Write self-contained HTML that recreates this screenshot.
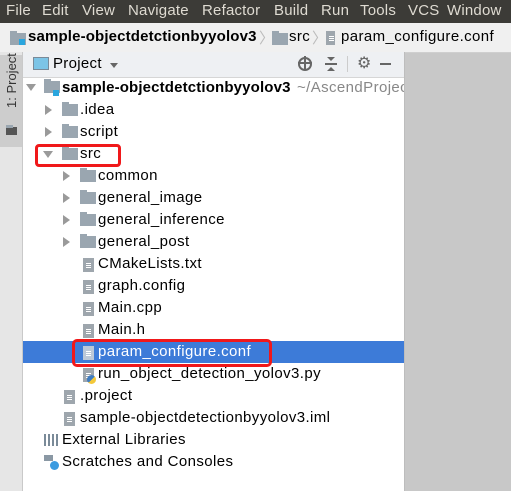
<!DOCTYPE html><html><head><style>
body{margin:0;width:511px;height:491px;overflow:hidden;background:#c8c8c8;font-family:"Liberation Sans","DejaVu Sans",sans-serif;font-size:15px;letter-spacing:.4px;color:#000;position:relative}
.a{position:absolute;white-space:nowrap}
.menu{left:0;top:0;width:511px;height:23px;background:#3c3b37;color:#dfdbd2;font-size:15px;letter-spacing:.2px}
.menu span{position:absolute;top:2px}
.bc{left:0;top:23px;width:511px;height:29px;background:#f0f0f0;border-bottom:1px solid #cfcfcf}
.strip{left:0;top:52px;width:22px;height:439px;background:#e6e6e6;border-right:1px solid #c9c9c9}
.panel{left:23px;top:52px;width:381px;height:439px;background:#fff;border-right:1px solid #bdbdbd;overflow:hidden}
.hdr{left:23px;top:52px;width:381px;height:25px;background:#eef0f3;border-bottom:1px solid #d6d6d6}
.fold{display:inline-block;width:16px;height:12px;background:#9aa6b0;position:absolute}
.fold:before{content:"";position:absolute;left:0;top:-2px;width:7px;height:3px;background:#9aa6b0}
.file{position:absolute;width:11px;height:14px;background:#9ea6ad}
.file:after{content:"";position:absolute;left:3px;top:5px;width:5px;height:1px;background:#fff;box-shadow:0 2px #fff,0 4px #fff}
.tri{position:absolute;width:0;height:0}
.tr{border-left:7px solid #9a9a9a;border-top:5px solid transparent;border-bottom:5px solid transparent}
.td{border-top:7px solid #9a9a9a;border-left:5px solid transparent;border-right:5px solid transparent}
.red{position:absolute;border:3px solid #f0181a;border-radius:4px}
</style></head><body>
<div class="a menu"><span style="left:6px">File</span><span style="left:42px">Edit</span><span style="left:82px">View</span><span style="left:128px">Navigate</span><span style="left:202px">Refactor</span><span style="left:274px">Build</span><span style="left:321px">Run</span><span style="left:360px">Tools</span><span style="left:408px">VCS</span><span style="left:447px">Window</span></div>
<div class="a bc">
<span class="fold" style="left:10px;top:10px"></span><span class="a" style="left:19px;top:16px;width:6px;height:6px;background:#2aa6de"></span>
<span class="a" style="left:28px;top:5px;font-weight:bold;letter-spacing:.15px">sample-objectdetctionbyyolov3</span>
<span class="a" style="left:259px;top:4px;color:#bbb">〉</span>
<span class="fold" style="left:272px;top:10px"></span>
<span class="a" style="left:289px;top:5px">src</span>
<span class="a" style="left:312px;top:4px;color:#bbb">〉</span>
<span class="file" style="left:326px;top:8px;width:9px"></span>
<span class="a" style="left:341px;top:5px">param_configure.conf</span>
</div>
<div class="a strip"><div class="a" style="left:0;top:3px;width:22px;height:92px;background:#cdcdcd"></div>
<div class="a" style="left:4px;top:56px;transform:rotate(-90deg);transform-origin:0 0;font-size:13px;letter-spacing:0;color:#333">1: Project</div>
<span class="fold" style="left:6px;top:75px;width:11px;height:8px;background:#555"></span></div>
<div class="a panel"><span class="a" style="left:274px;top:27px;color:#888">~/AscendProject</span></div>
<div class="a hdr">
<span class="a" style="left:10px;top:5px;width:16px;height:13px;background:#7cc4e6;border:1px solid #7a8a98;box-sizing:border-box"></span>
<span class="a" style="left:30px;top:3px;font-size:15px;letter-spacing:.3px">Project</span>
<span class="tri td" style="left:87px;top:11px;border-top-width:5px;border-top-color:#666;border-left-width:4px;border-right-width:4px"></span>
<span class="a" style="left:275px;top:5px;width:10px;height:10px;border:2px solid #666;border-radius:50%"></span>
<span class="a" style="left:281px;top:4px;width:2px;height:14px;background:#666"></span><span class="a" style="left:275px;top:10px;width:14px;height:2px;background:#666"></span>
<span class="a" style="left:302px;top:11px;width:12px;height:2px;background:#666"></span>
<span class="tri" style="left:304px;top:5px;border-top:4px solid #666;border-left:4px solid transparent;border-right:4px solid transparent"></span>
<span class="tri" style="left:304px;top:15px;border-bottom:4px solid #666;border-left:4px solid transparent;border-right:4px solid transparent"></span>
<span class="a" style="left:324px;top:4px;width:1px;height:16px;background:#ccc"></span>
<span class="a" style="left:334px;top:1px;color:#666;font-size:16px">⚙</span>
<span class="a" style="left:357px;top:11px;width:11px;height:2px;background:#666"></span>
</div>
<div class="a" style="left:23px;top:341px;width:381px;height:22px;background:#3d7bd8"></div>
<span class="tri td" style="left:26px;top:84px"></span><span class="fold" style="left:44px;top:81px"></span><span class="a" style="left:53px;top:90px;width:6px;height:6px;background:#2aa6de"></span>
<span class="a" style="left:62px;top:79px;font-weight:bold;letter-spacing:.15px">sample-objectdetctionbyyolov3</span>
<span class="tri tr" style="left:45px;top:105px"></span><span class="fold" style="left:62px;top:104px"></span><span class="a" style="left:80px;top:101px">.idea</span>
<span class="tri tr" style="left:45px;top:127px"></span><span class="fold" style="left:62px;top:126px"></span><span class="a" style="left:80px;top:123px">script</span>
<span class="tri td" style="left:43px;top:151px"></span><span class="fold" style="left:62px;top:148px"></span><span class="a" style="left:80px;top:145px">src</span>
<span class="red" style="left:35px;top:144px;width:80px;height:17px"></span>
<span class="tri tr" style="left:63px;top:171px"></span><span class="fold" style="left:80px;top:170px"></span><span class="a" style="left:98px;top:167px">common</span>
<span class="tri tr" style="left:63px;top:193px"></span><span class="fold" style="left:80px;top:192px"></span><span class="a" style="left:98px;top:189px">general_image</span>
<span class="tri tr" style="left:63px;top:215px"></span><span class="fold" style="left:80px;top:214px"></span><span class="a" style="left:98px;top:211px">general_inference</span>
<span class="tri tr" style="left:63px;top:237px"></span><span class="fold" style="left:80px;top:236px"></span><span class="a" style="left:98px;top:233px">general_post</span>
<span class="file" style="left:83px;top:258px"></span><span class="a" style="left:98px;top:255px">CMakeLists.txt</span>
<span class="file" style="left:83px;top:280px"></span><span class="a" style="left:98px;top:277px">graph.config</span>
<span class="file" style="left:83px;top:302px"></span><span class="a" style="left:98px;top:299px">Main.cpp</span>
<span class="file" style="left:83px;top:324px"></span><span class="a" style="left:98px;top:321px">Main.h</span>
<span class="file" style="left:83px;top:346px;background:#bcc8d8"></span><span class="a" style="left:98px;top:343px;color:#fff">param_configure.conf</span>
<span class="red" style="left:72px;top:339px;width:194px;height:22px;border-radius:5px"></span>
<span class="file" style="left:83px;top:368px"></span><span class="a" style="left:87px;top:375px;width:9px;height:9px;border-radius:50%;background:linear-gradient(135deg,#3f7cc0 50%,#f3c83a 50%)"></span><span class="a" style="left:98px;top:365px">run_object_detection_yolov3.py</span>
<span class="file" style="left:64px;top:390px"></span><span class="a" style="left:80px;top:387px">.project</span>
<span class="file" style="left:64px;top:412px"></span><span class="a" style="left:80px;top:409px">sample-objectdetectionbyyolov3.iml</span>
<span class="a" style="left:44px;top:434px;width:14px;height:12px;background:repeating-linear-gradient(90deg,#7a8a98 0 2px,transparent 2px 4px)"></span><span class="a" style="left:62px;top:431px">External Libraries</span>
<span class="a" style="left:44px;top:455px;width:9px;height:6px;background:#8a98a4"></span><span class="a" style="left:50px;top:461px;width:9px;height:9px;border-radius:50%;background:#3b9be0"></span><span class="a" style="left:62px;top:453px">Scratches and Consoles</span>
</body></html>
